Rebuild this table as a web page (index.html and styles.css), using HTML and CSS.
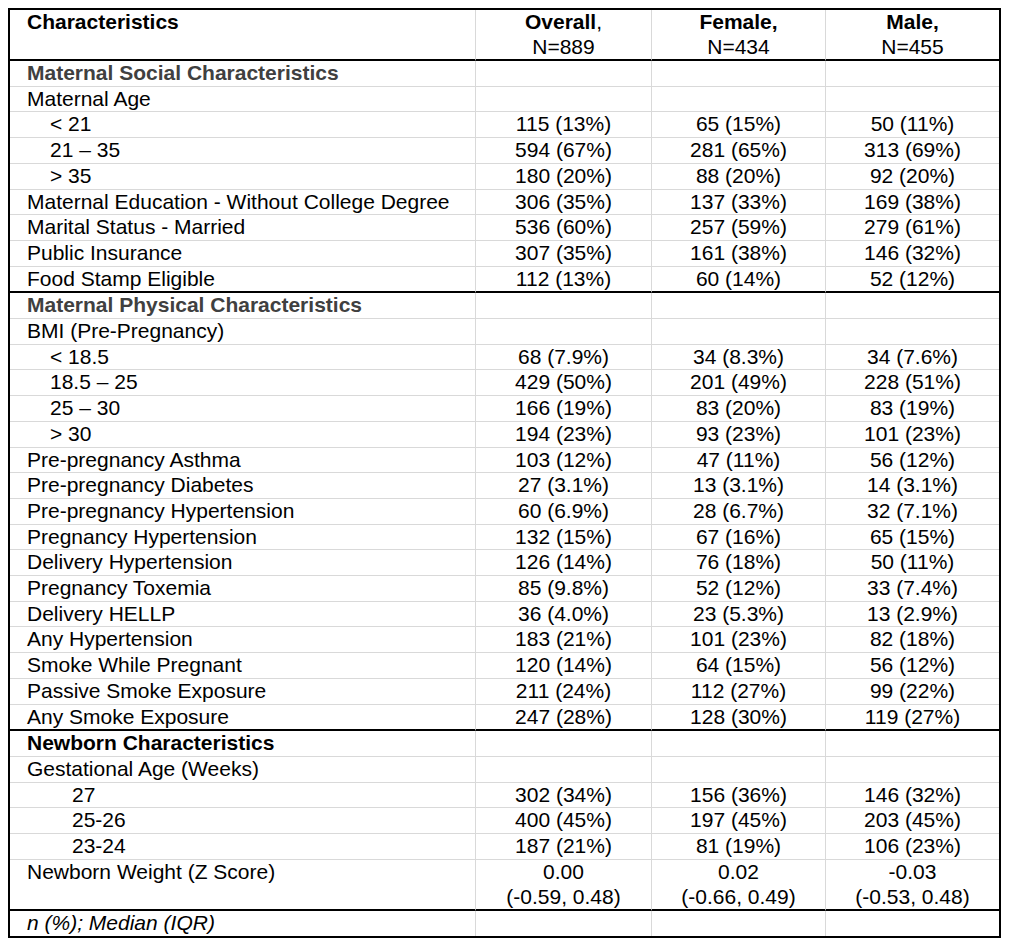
FILE: index.html
```html
<!DOCTYPE html>
<html lang="en">
<head>
<meta charset="utf-8">
<title>Characteristics table</title>
<link rel="stylesheet" href="styles.css">
</head>
<body>
<div class="page">
<table class="summary">
  <colgroup>
    <col class="col-label">
    <col class="col-all">
    <col class="col-female">
    <col class="col-male">
  </colgroup>
  <thead>
    <tr class="head-row">
      <th class="label">Characteristics</th>
      <th><b>Overall</b>,<br><span class="reg">N=889</span></th>
      <th><b>Female,</b><br><span class="reg">N=434</span></th>
      <th><b>Male,</b><br><span class="reg">N=455</span></th>
    </tr>
  </thead>
  <tbody>
    <tr class="section gray"><td class="label">Maternal Social Characteristics</td><td></td><td></td><td></td></tr>
    <tr><td class="label">Maternal Age</td><td></td><td></td><td></td></tr>
    <tr><td class="label lvl2">&lt; 21</td><td>115 (13%)</td><td>65 (15%)</td><td>50 (11%)</td></tr>
    <tr><td class="label lvl2">21 – 35</td><td>594 (67%)</td><td>281 (65%)</td><td>313 (69%)</td></tr>
    <tr><td class="label lvl2">&gt; 35</td><td>180 (20%)</td><td>88 (20%)</td><td>92 (20%)</td></tr>
    <tr><td class="label">Maternal Education - Without College Degree</td><td>306 (35%)</td><td>137 (33%)</td><td>169 (38%)</td></tr>
    <tr><td class="label">Marital Status - Married</td><td>536 (60%)</td><td>257 (59%)</td><td>279 (61%)</td></tr>
    <tr><td class="label">Public Insurance</td><td>307 (35%)</td><td>161 (38%)</td><td>146 (32%)</td></tr>
    <tr class="end"><td class="label">Food Stamp Eligible</td><td>112 (13%)</td><td>60 (14%)</td><td>52 (12%)</td></tr>

    <tr class="section gray"><td class="label">Maternal Physical Characteristics</td><td></td><td></td><td></td></tr>
    <tr><td class="label">BMI (Pre-Pregnancy)</td><td></td><td></td><td></td></tr>
    <tr><td class="label lvl2">&lt; 18.5</td><td>68 (7.9%)</td><td>34 (8.3%)</td><td>34 (7.6%)</td></tr>
    <tr><td class="label lvl2">18.5 – 25</td><td>429 (50%)</td><td>201 (49%)</td><td>228 (51%)</td></tr>
    <tr><td class="label lvl2">25 – 30</td><td>166 (19%)</td><td>83 (20%)</td><td>83 (19%)</td></tr>
    <tr><td class="label lvl2">&gt; 30</td><td>194 (23%)</td><td>93 (23%)</td><td>101 (23%)</td></tr>
    <tr><td class="label">Pre-pregnancy Asthma</td><td>103 (12%)</td><td>47 (11%)</td><td>56 (12%)</td></tr>
    <tr><td class="label">Pre-pregnancy Diabetes</td><td>27 (3.1%)</td><td>13 (3.1%)</td><td>14 (3.1%)</td></tr>
    <tr><td class="label">Pre-pregnancy Hypertension</td><td>60 (6.9%)</td><td>28 (6.7%)</td><td>32 (7.1%)</td></tr>
    <tr><td class="label">Pregnancy Hypertension</td><td>132 (15%)</td><td>67 (16%)</td><td>65 (15%)</td></tr>
    <tr><td class="label">Delivery Hypertension</td><td>126 (14%)</td><td>76 (18%)</td><td>50 (11%)</td></tr>
    <tr><td class="label">Pregnancy Toxemia</td><td>85 (9.8%)</td><td>52 (12%)</td><td>33 (7.4%)</td></tr>
    <tr><td class="label">Delivery HELLP</td><td>36 (4.0%)</td><td>23 (5.3%)</td><td>13 (2.9%)</td></tr>
    <tr><td class="label">Any Hypertension</td><td>183 (21%)</td><td>101 (23%)</td><td>82 (18%)</td></tr>
    <tr><td class="label">Smoke While Pregnant</td><td>120 (14%)</td><td>64 (15%)</td><td>56 (12%)</td></tr>
    <tr><td class="label">Passive Smoke Exposure</td><td>211 (24%)</td><td>112 (27%)</td><td>99 (22%)</td></tr>
    <tr class="end"><td class="label">Any Smoke Exposure</td><td>247 (28%)</td><td>128 (30%)</td><td>119 (27%)</td></tr>

    <tr class="section"><td class="label">Newborn Characteristics</td><td></td><td></td><td></td></tr>
    <tr><td class="label">Gestational Age (Weeks)</td><td></td><td></td><td></td></tr>
    <tr><td class="label lvl3">27</td><td>302 (34%)</td><td>156 (36%)</td><td>146 (32%)</td></tr>
    <tr><td class="label lvl3">25-26</td><td>400 (45%)</td><td>197 (45%)</td><td>203 (45%)</td></tr>
    <tr><td class="label lvl3">23-24</td><td>187 (21%)</td><td>81 (19%)</td><td>106 (23%)</td></tr>
    <tr class="end"><td class="label">Newborn Weight (Z Score)</td><td>0.00<br>(-0.59, 0.48)</td><td>0.02<br>(-0.66, 0.49)</td><td>-0.03<br>(-0.53, 0.48)</td></tr>
  </tbody>
  <tfoot>
    <tr class="foot"><td class="label note">n (%); Median (IQR)</td><td></td><td></td><td></td></tr>
  </tfoot>
</table>
</div>
</body>
</html>
```

FILE: styles.css
```css
html, body {
  margin: 0;
  padding: 0;
  background: #ffffff;
}

.page {
  padding: 8px;
}

.summary {
  border-collapse: separate;
  border-spacing: 0;
  table-layout: fixed;
  width: 993px;
  border: 2px solid #000;
  font-family: "Liberation Sans", Arial, Helvetica, sans-serif;
  font-size: 21px;
  color: #000;
}

.col-label { width: 466px; }
.col-all { width: 176px; }
.col-female { width: 174px; }
.col-male { width: 173px; }

.summary th,
.summary td {
  box-sizing: border-box;
  padding: 0;
  line-height: 24.7px;
  text-align: center;
  vertical-align: top;
  border-right: 1px solid #d9d9d9;
  border-bottom: 1px solid #d9d9d9;
  white-space: nowrap;
}

.summary th:last-child,
.summary td:last-child {
  border-right: none;
}

.summary th {
  font-weight: normal;
  line-height: 24.5px;
  border-bottom: 2px solid #000;
}

.summary th b {
  font-weight: bold;
}

.summary th.label {
  font-weight: bold;
}

.summary .label {
  text-align: left;
  padding-left: 17px;
}

.summary .lvl2 {
  padding-left: 40px;
}

.summary .lvl3 {
  padding-left: 62px;
}

.section td.label {
  font-weight: bold;
}

.section.gray td.label {
  color: #404040;
}

.summary tr.end td {
  border-bottom: 2px solid #000;
}

.summary tr.foot td {
  border-bottom: none;
}

.note {
  font-style: italic;
}
```
